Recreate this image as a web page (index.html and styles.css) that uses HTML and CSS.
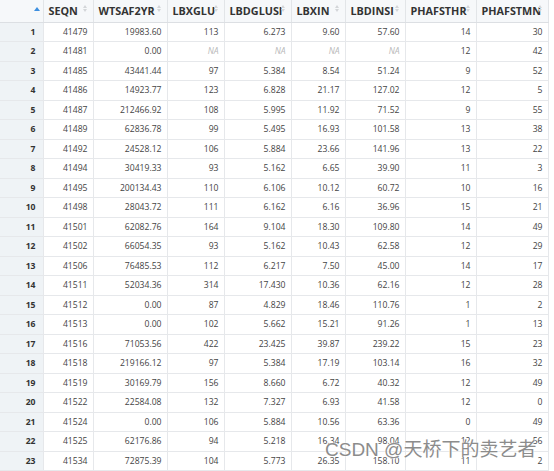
FILE: index.html
```html
<!DOCTYPE html>
<html>
<head>
<meta charset="utf-8">
<link rel="stylesheet" href="styles.css">
</head>
<body>
<div class="viewer">
<table class="grid">
<colgroup>
<col class="c-idx"><col class="c-seqn"><col class="c-wt"><col class="c-glu"><col class="c-glusi"><col class="c-xin"><col class="c-insi"><col class="c-thr"><col class="c-tmn">
</colgroup>
<thead>
<tr>
<th class="idx-h"><span class="asc"></span></th>
<th>SEQN<span class="sort"></span></th>
<th>WTSAF2YR<span class="sort"></span></th>
<th>LBXGLU<span class="sort"></span></th>
<th>LBDGLUSI<span class="sort"></span></th>
<th>LBXIN<span class="sort"></span></th>
<th>LBDINSI<span class="sort"></span></th>
<th>PHAFSTHR<span class="sort"></span></th>
<th>PHAFSTMN<span class="sort"></span></th>
</tr>
</thead>
<tbody>
<tr><td class="idx">1</td><td>41479</td><td>19983.60</td><td>113</td><td>6.273</td><td>9.60</td><td>57.60</td><td>14</td><td>30</td></tr>
<tr><td class="idx">2</td><td>41481</td><td>0.00</td><td class="na">NA</td><td class="na">NA</td><td class="na">NA</td><td class="na">NA</td><td>12</td><td>42</td></tr>
<tr><td class="idx">3</td><td>41485</td><td>43441.44</td><td>97</td><td>5.384</td><td>8.54</td><td>51.24</td><td>9</td><td>52</td></tr>
<tr><td class="idx">4</td><td>41486</td><td>14923.77</td><td>123</td><td>6.828</td><td>21.17</td><td>127.02</td><td>12</td><td>5</td></tr>
<tr><td class="idx">5</td><td>41487</td><td>212466.92</td><td>108</td><td>5.995</td><td>11.92</td><td>71.52</td><td>9</td><td>55</td></tr>
<tr><td class="idx">6</td><td>41489</td><td>62836.78</td><td>99</td><td>5.495</td><td>16.93</td><td>101.58</td><td>13</td><td>38</td></tr>
<tr><td class="idx">7</td><td>41492</td><td>24528.12</td><td>106</td><td>5.884</td><td>23.66</td><td>141.96</td><td>13</td><td>22</td></tr>
<tr><td class="idx">8</td><td>41494</td><td>30419.33</td><td>93</td><td>5.162</td><td>6.65</td><td>39.90</td><td>11</td><td>3</td></tr>
<tr><td class="idx">9</td><td>41495</td><td>200134.43</td><td>110</td><td>6.106</td><td>10.12</td><td>60.72</td><td>10</td><td>16</td></tr>
<tr><td class="idx">10</td><td>41498</td><td>28043.72</td><td>111</td><td>6.162</td><td>6.16</td><td>36.96</td><td>15</td><td>21</td></tr>
<tr><td class="idx">11</td><td>41501</td><td>62082.76</td><td>164</td><td>9.104</td><td>18.30</td><td>109.80</td><td>14</td><td>49</td></tr>
<tr><td class="idx">12</td><td>41502</td><td>66054.35</td><td>93</td><td>5.162</td><td>10.43</td><td>62.58</td><td>12</td><td>29</td></tr>
<tr><td class="idx">13</td><td>41506</td><td>76485.53</td><td>112</td><td>6.217</td><td>7.50</td><td>45.00</td><td>14</td><td>17</td></tr>
<tr><td class="idx">14</td><td>41511</td><td>52034.36</td><td>314</td><td>17.430</td><td>10.36</td><td>62.16</td><td>12</td><td>28</td></tr>
<tr><td class="idx">15</td><td>41512</td><td>0.00</td><td>87</td><td>4.829</td><td>18.46</td><td>110.76</td><td>1</td><td>2</td></tr>
<tr><td class="idx">16</td><td>41513</td><td>0.00</td><td>102</td><td>5.662</td><td>15.21</td><td>91.26</td><td>1</td><td>13</td></tr>
<tr><td class="idx">17</td><td>41516</td><td>71053.56</td><td>422</td><td>23.425</td><td>39.87</td><td>239.22</td><td>15</td><td>23</td></tr>
<tr><td class="idx">18</td><td>41518</td><td>219166.12</td><td>97</td><td>5.384</td><td>17.19</td><td>103.14</td><td>16</td><td>32</td></tr>
<tr><td class="idx">19</td><td>41519</td><td>30169.79</td><td>156</td><td>8.660</td><td>6.72</td><td>40.32</td><td>12</td><td>49</td></tr>
<tr><td class="idx">20</td><td>41522</td><td>22584.08</td><td>132</td><td>7.327</td><td>6.93</td><td>41.58</td><td>12</td><td>0</td></tr>
<tr><td class="idx">21</td><td>41524</td><td>0.00</td><td>106</td><td>5.884</td><td>10.56</td><td>63.36</td><td>0</td><td>49</td></tr>
<tr><td class="idx">22</td><td>41525</td><td>62176.86</td><td>94</td><td>5.218</td><td>16.34</td><td>98.04</td><td>12</td><td>56</td></tr>
<tr><td class="idx">23</td><td>41534</td><td>72875.39</td><td>104</td><td>5.773</td><td>26.35</td><td>158.10</td><td>11</td><td>2</td></tr>
</tbody>
</table>
<div class="watermark">CSDN @天桥下的卖艺者</div>
</div>
</body>
</html>
```

FILE: styles.css
```css
html, body {
  margin: 0;
  padding: 0;
  background: #ffffff;
}

.viewer {
  position: relative;
  width: 554px;
  height: 471px;
  overflow: hidden;
}

.grid {
  table-layout: fixed;
  border-collapse: collapse;
  width: 548px;
  font-family: "Open Sans", "Noto Sans", sans-serif;
  color: #333;
}

.c-idx { width: 43px; }
.c-seqn { width: 50px; }
.c-wt { width: 74px; }
.c-glu { width: 57px; }
.c-glusi { width: 67px; }
.c-xin { width: 54px; }
.c-insi { width: 60px; }
.c-thr { width: 71px; }
.c-tmn { width: 72px; }

.grid th {
  position: relative;
  height: 22px;
  padding: 0 5px;
  box-sizing: border-box;
  background: #f6f8fa;
  border: 1px solid #e2e5e8;
  border-top: none;
  border-bottom-color: #dcdfe3;
  text-align: left;
  font-size: 10.8px;
  font-weight: 700;
  color: #333;
  white-space: nowrap;
  overflow: hidden;
}

.grid th:first-child,
.grid td:first-child {
  border-left: none;
}

.grid td {
  height: 19.5px;
  padding: 0 5px;
  box-sizing: border-box;
  border: 1px solid #e6e8eb;
  text-align: right;
  font-size: 8.6px;
  color: #444;
  white-space: nowrap;
}

.grid td.idx {
  background: #eff3f6;
  font-weight: 700;
  color: #333;
  padding-right: 7px;
}

.grid td.na {
  color: #b8b8b8;
  font-style: italic;
}

.sort {
  position: absolute;
  right: 5px;
  top: 5px;
  width: 5px;
  height: 7px;
}

.sort::before,
.sort::after {
  content: "";
  position: absolute;
  left: 0;
  border-left: 2.5px solid transparent;
  border-right: 2.5px solid transparent;
}

.sort::before {
  top: 0;
  border-bottom: 3px solid #d3d6d9;
}

.sort::after {
  bottom: 0;
  border-top: 3px solid #d3d6d9;
}

.asc {
  position: absolute;
  left: 34px;
  top: 7px;
  width: 0;
  height: 0;
  border-left: 3px solid transparent;
  border-right: 3px solid transparent;
  border-bottom: 4px solid #3d8fe0;
}

.watermark {
  position: absolute;
  left: 325px;
  top: 438px;
  font-family: "Liberation Sans", "Noto Sans CJK SC", sans-serif;
  font-size: 19px;
  line-height: 24px;
  color: #8c8c8c;
  text-shadow: 0 0 2px #fff, 0 0 2px #fff;
  white-space: nowrap;
}
```
